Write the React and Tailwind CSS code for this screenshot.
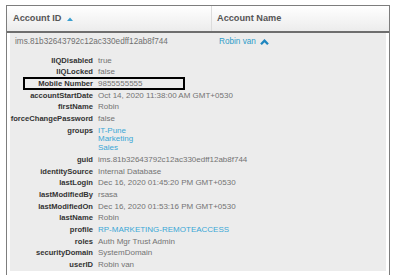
import React from "react";

const rows = [
  ["IIQDisabled", ["true"]],
  ["IIQLocked", ["false"]],
  ["Mobile Number", ["9855555555"]],
  ["accountStartDate", ["Oct 14, 2020 11:38:00 AM GMT+0530"]],
  ["firstName", ["Robin"]],
  ["forceChangePassword", ["false"]],
  ["groups", ["IT-Pune", "Marketing", "Sales"], true],
  ["guid", ["ims.81b32643792c12ac330edff12ab8f744"]],
  ["identitySource", ["Internal Database"]],
  ["lastLogin", ["Dec 16, 2020 01:45:20 PM GMT+0530"]],
  ["lastModifiedBy", ["rsasa"]],
  ["lastModifiedOn", ["Dec 16, 2020 01:53:16 PM GMT+0530"]],
  ["lastName", ["Robin"]],
  ["profile", ["RP-MARKETING-REMOTEACCESS"], true],
  ["roles", ["Auth Mgr Trust Admin"]],
  ["securityDomain", ["SystemDomain"]],
  ["userID", ["Robin van"]],
];

export default function App() {
  return (
    <div
      className="relative w-[400px] h-[275px] bg-white overflow-hidden"
      style={{ fontFamily: '"Liberation Sans", Arial, sans-serif' }}
    >
      <div className="ml-[6px] mt-[5px] w-[384px] h-[270px] border-x border-t border-[#7d7d7d] flex flex-col">
        {/* header */}
        <div className="h-[27px] flex shrink-0 border-b-2 border-[#6e6e6e] bg-gradient-to-b from-white to-[#ececec]">
          <div className="w-[205px] flex items-center pl-[6px] border-r border-[#dcdcdc] text-[9.2px] font-bold text-[#555]">
            <span>Account ID</span>
            <svg className="ml-[5px]" width="6" height="4" viewBox="0 0 6 4">
              <path d="M0 4 L3 0.5 L6 4 Z" fill="#3a9fd0" />
            </svg>
          </div>
          <div className="flex items-center pl-[5px] text-[9.2px] font-bold text-[#555]">
            Account Name
          </div>
        </div>
        {/* body */}
        <div className="mx-[3px] mb-[5px] flex-1 bg-[#ececec]">
          <div className="h-[19px] flex items-center text-[8.2px] text-[#707070]">
            <div className="w-[204px] pl-[5px]">ims.81b32643792c12ac330edff12ab8f744</div>
            <div className="flex items-center pl-[5px] text-[#2f9cc9]">
              <span>Robin van</span>
              <svg className="ml-[4px]" width="9" height="6" viewBox="0 0 9 6">
                <path d="M1 5.2 L4.5 1.6 L8 5.2" fill="none" stroke="#1f86bf" strokeWidth="2.3" />
              </svg>
            </div>
          </div>
          <div className="mt-[3px] grid grid-cols-[83px_1fr] gap-x-[5px]">
            {rows.map(([label, vals, link]) => (
              <React.Fragment key={label}>
                <div className="text-right text-[7.6px] font-bold text-[#333] leading-[8.7px] py-[1.5px]">
                  {label}
                </div>
                <div
                  className={`text-[8px] leading-[8.7px] py-[1.5px] ${
                    link ? "text-[#3aa7d6]" : "text-[#737373]"
                  }`}
                >
                  {vals.map((v) => (
                    <div key={v}>{v}</div>
                  ))}
                </div>
              </React.Fragment>
            ))}
          </div>
        </div>
      </div>
      <div className="absolute left-[23px] top-[77px] w-[162px] h-[13px] border-2 border-black" />
    </div>
  );
}
